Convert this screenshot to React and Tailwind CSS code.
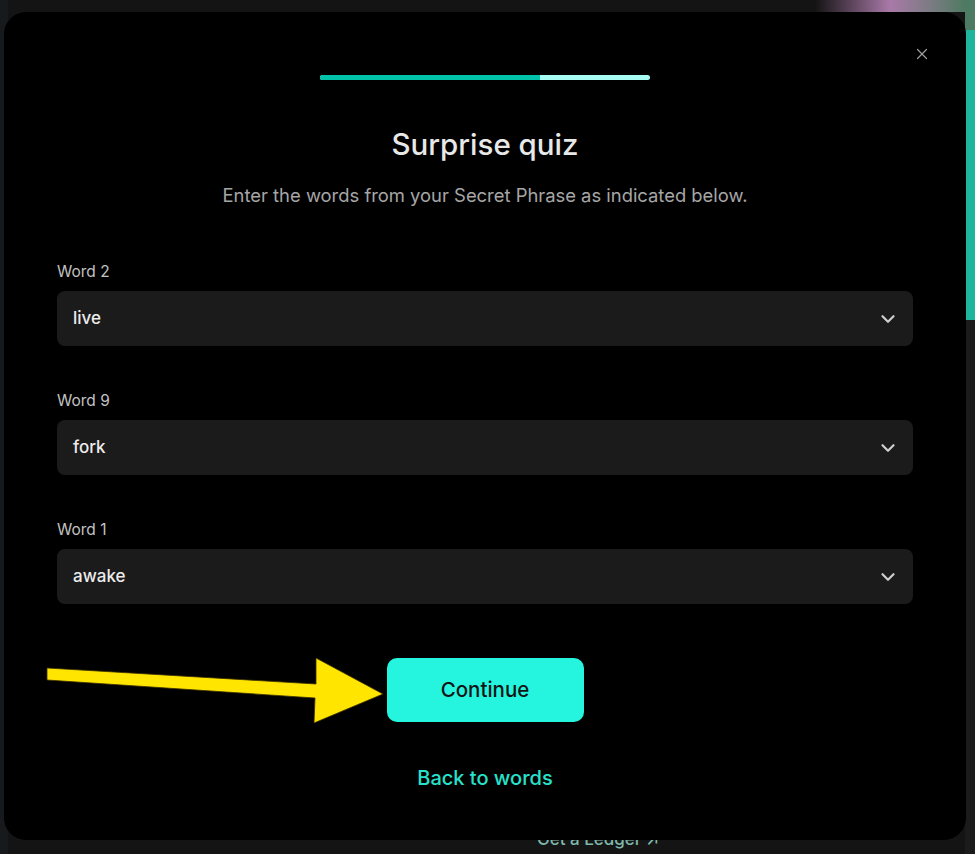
import React from 'react';
import { ChevronDown, X } from 'lucide-react';

const font = { fontFamily: 'Inter, "Noto Sans", sans-serif' };

const WordSelect = ({ label, value }) => (
  <div className="flex flex-col">
    <label className="text-[15.5px] leading-[20px] text-[#c2c2c2]">{label}</label>
    <div className="mt-[9px] h-[55px] rounded-[8px] bg-[#1b1b1b] flex items-center justify-between pl-[16px] pr-[14px]">
      <span className="text-[17px] font-medium text-[#ececec]">{value}</span>
      <ChevronDown size={22} strokeWidth={2.4} className="text-[#cfcfcf]" />
    </div>
  </div>
);

const Arrow = () => (
  <svg className="absolute left-0 top-0 pointer-events-none" width="975" height="854" viewBox="0 0 975 854">
    <polygon
      points="47,668 316,684 316,658 383,694 314,723 315,698 47,680"
      fill="#ffe500"
      stroke="#3a3000"
      strokeWidth="0.8"
      strokeLinejoin="round"
    />
  </svg>
);

export default function App() {
  return (
    <div className="relative w-[975px] h-[854px] overflow-hidden bg-[#141414]" style={font}>
      {/* app behind the dialog */}
      <div className="flex h-full">
        <div className="w-[8px] bg-[#161a1c]" />
        <div className="flex-1 flex flex-col">
          <div className="h-[12px] flex">
            <div className="flex-1" />
            <div className="w-[150px] bg-gradient-to-r from-[#14141400] via-[#a979a8] to-[#4e7a62]" />
          </div>
          <div className="flex-1" />
          <div className="h-[28px] flex items-end pl-[529px] pb-[2px]">
            <span className="text-[17px] font-medium text-[#7fb8ab]">Get a Ledger ↗</span>
          </div>
        </div>
        <div className="w-[10px] flex flex-col bg-[#1e2a27]">
          <div className="h-[30px] bg-[#4d7a63]" />
          <div className="h-[290px] bg-[#1fb59c]" />
          <div className="flex-1 bg-[#1b1b1b]" />
        </div>
      </div>

      {/* dialog */}
      <div className="absolute left-[4px] top-[12px] w-[962px] h-[828px] rounded-[22px] bg-black flex flex-col items-center">
        <button className="absolute right-[35px] top-[33px] text-[#9a9a9a]">
          <X size={18} strokeWidth={1.6} />
        </button>

        <div className="mt-[63px] h-[5px] w-[330px] rounded-full bg-[#a6fbf2] flex overflow-hidden">
          <div className="w-[220px] h-full bg-[#00c3aa]" />
        </div>

        <h1 className="mt-[46px] text-[29.5px] leading-[36px] font-medium text-[#e8e8e8]">Surprise quiz</h1>
        <p className="mt-[21px] text-[18.4px] leading-[24px] text-[#a6a6a6]">
          Enter the words from your Secret Phrase as indicated below.
        </p>

        <div className="self-stretch px-[53px] mt-[55px] flex flex-col gap-[45px]">
          <WordSelect label="Word 2" value="live" />
          <WordSelect label="Word 9" value="fork" />
          <WordSelect label="Word 1" value="awake" />
        </div>

        <button className="mt-[54px] w-[197px] h-[64px] rounded-[10px] bg-[#25f4df] text-[20.5px] font-medium text-[#141414]">
          Continue
        </button>

        <button className="mt-[44px] text-[20px] leading-[24px] font-medium text-[#27e2cb]">Back to words</button>
      </div>

      <Arrow />
    </div>
  );
}
